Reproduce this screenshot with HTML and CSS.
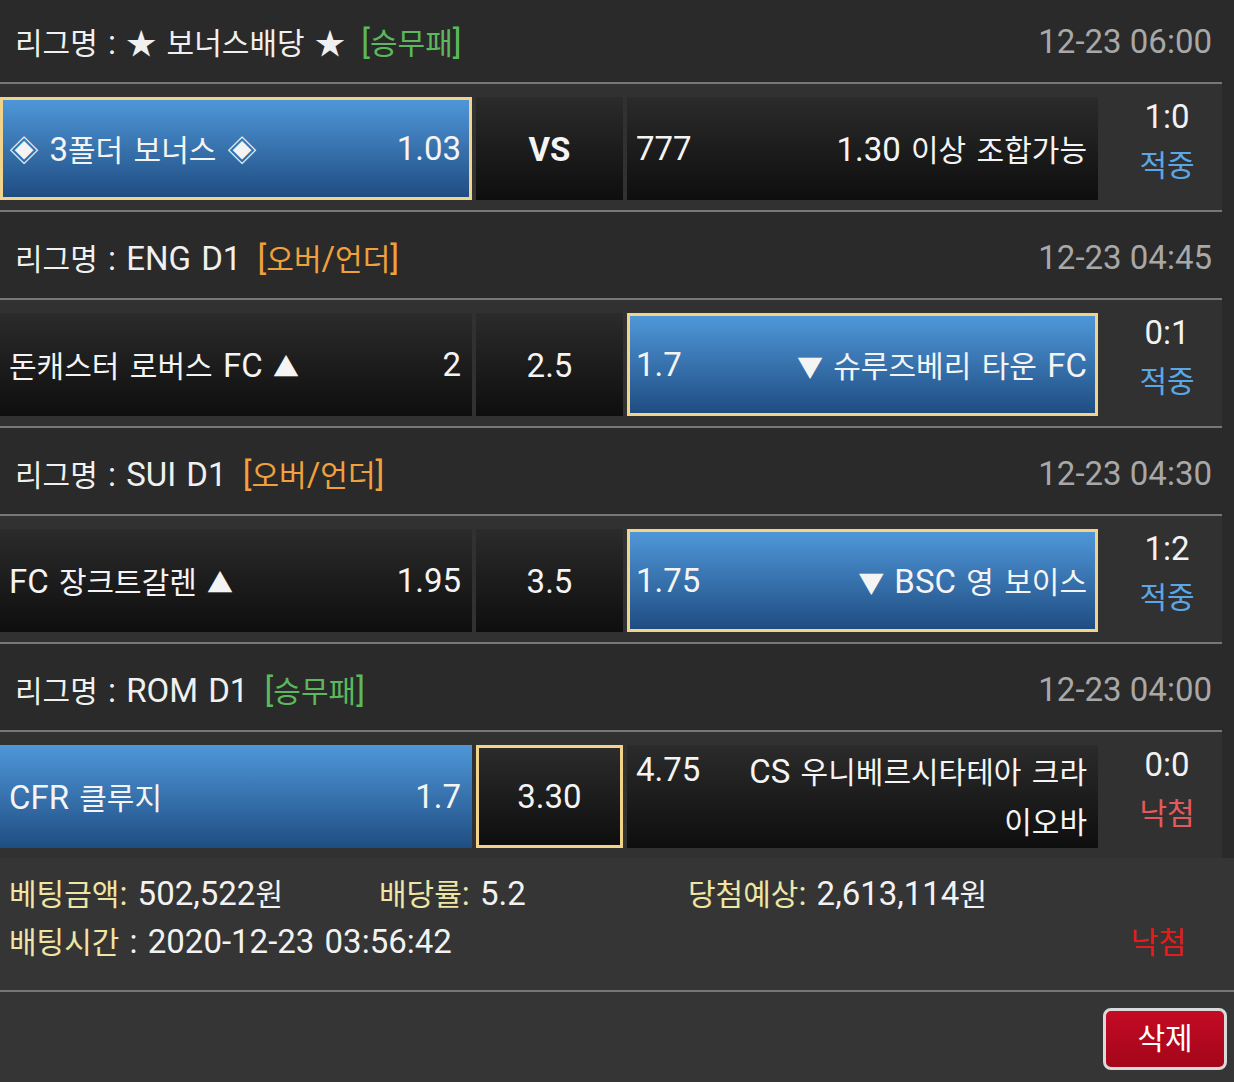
FILE: index.html
```html
<!DOCTYPE html>
<html lang="ko">
<head>
<meta charset="utf-8">
<title>베팅내역</title>
<link rel="stylesheet" href="styles.css">
</head>
<body>
<div class="page">
  <section class="league">
    <div class="league-head">
      <div class="league-name"><span class="k">리그명</span> : <span class="k">★ 보너스배당 ★</span> <span class="tag green">[<span class="k">승무패</span>]</span></div>
      <div class="league-time">12-23 06:00</div>
    </div>
    <div class="match">
      <div class="cell blue pick"><span class="name"><span class="k">◈ </span>3<span class="k">폴더 보너스 ◈</span></span><span class="odds">1.03</span></div>
      <div class="cell dark mid"><b>VS</b></div>
      <div class="cell dark"><span class="odds">777</span><span class="name">1.30 <span class="k">이상 조합가능</span></span></div>
      <div class="result"><div>1:0</div><div class="k hit">적중</div></div>
    </div>
  </section>

  <section class="league">
    <div class="league-head">
      <div class="league-name"><span class="k">리그명</span> : ENG D1 <span class="tag orange">[<span class="k">오버</span>/<span class="k">언더</span>]</span></div>
      <div class="league-time">12-23 04:45</div>
    </div>
    <div class="match">
      <div class="cell dark"><span class="name"><span class="k">돈캐스터 로버스 </span>FC <span class="tri">▲</span></span><span class="odds">2</span></div>
      <div class="cell dark mid">2.5</div>
      <div class="cell blue pick"><span class="odds">1.7</span><span class="name"><span class="tri">▼</span> <span class="k">슈루즈베리 타운 </span>FC</span></div>
      <div class="result"><div>0:1</div><div class="k hit">적중</div></div>
    </div>
  </section>

  <section class="league">
    <div class="league-head">
      <div class="league-name"><span class="k">리그명</span> : SUI D1 <span class="tag orange">[<span class="k">오버</span>/<span class="k">언더</span>]</span></div>
      <div class="league-time">12-23 04:30</div>
    </div>
    <div class="match">
      <div class="cell dark"><span class="name">FC <span class="k">장크트갈렌</span> <span class="tri">▲</span></span><span class="odds">1.95</span></div>
      <div class="cell dark mid">3.5</div>
      <div class="cell blue pick"><span class="odds">1.75</span><span class="name"><span class="tri">▼</span> BSC <span class="k">영 보이스</span></span></div>
      <div class="result"><div>1:2</div><div class="k hit">적중</div></div>
    </div>
  </section>

  <section class="league">
    <div class="league-head">
      <div class="league-name"><span class="k">리그명</span> : ROM D1 <span class="tag green">[<span class="k">승무패</span>]</span></div>
      <div class="league-time">12-23 04:00</div>
    </div>
    <div class="match last">
      <div class="cell blue"><span class="name">CFR <span class="k">클루지</span></span><span class="odds">1.7</span></div>
      <div class="cell dark mid pick">3.30</div>
      <div class="cell dark wrap"><span class="odds">4.75</span><span class="name">CS <span class="k">우니베르시타테아 크라<br>이오바</span></span></div>
      <div class="result"><div>0:0</div><div class="k miss">낙첨</div></div>
    </div>
  </section>

  <section class="summary">
    <div class="sum-row">
      <div class="sum-item"><span class="label"><span class="k">베팅금액</span>:</span> 502,522<span class="k">원</span></div>
      <div class="sum-item"><span class="label"><span class="k">배당률</span>:</span> 5.2</div>
      <div class="sum-item"><span class="label"><span class="k">당첨예상</span>:</span> 2,613,114<span class="k">원</span></div>
    </div>
    <div class="sum-line">
      <div class="sum-item"><span class="label k">배팅시간</span> : 2020-12-23 03:56:42</div>
      <div class="k status-miss">낙첨</div>
    </div>
  </section>

  <div class="actions">
    <button class="btn-delete" type="button"><span class="k">삭제</span></button>
  </div>
</div>
</body>
</html>
```

FILE: styles.css
```css
* {
  box-sizing: border-box;
}

html,
body {
  margin: 0;
  padding: 0;
}

body {
  width: 1234px;
  height: 1082px;
  overflow: hidden;
  background: #2a2a2a;
  color: #f2f2f2;
  font-family: Roboto, "Noto Sans CJK KR", sans-serif;
  font-size: 33px;
  line-height: 46px;
  word-spacing: 2px;
}

.k {
  font-family: "Noto Sans CJK KR", sans-serif;
  font-size: 30px;
}

.tri {
  font-family: "Noto Sans CJK KR", sans-serif;
  font-size: 26px;
}

.page {
  margin-top: -4px;
}

.league {
  width: 1222px;
}

.league-head {
  height: 88px;
  display: flex;
  align-items: center;
  justify-content: space-between;
  padding: 5px 10px 0 15px;
  border-bottom: 2px solid #777777;
  background: #2a2a2a;
  white-space: nowrap;
}

.league-name {
  color: #f0f0f0;
}

.tag {
  margin-left: 6px;
}

.green {
  color: #5cb85c;
}

.orange {
  color: #f0a13c;
}

.league-time {
  color: #a8a8a8;
  word-spacing: 0;
}

.match {
  height: 128px;
  display: grid;
  grid-template-columns: 472px 147px 471px 1fr;
  column-gap: 4px;
  padding: 13px 0 10px;
  background: #313131;
  border-bottom: 2px solid #777777;
}

.match.last {
  border-bottom: 0;
  height: 126px;
}

.cell {
  height: 103px;
  display: flex;
  align-items: center;
  justify-content: space-between;
  padding: 0 11px 0 9px;
  white-space: nowrap;
  color: #f4f4f4;
}

.cell.blue {
  background: linear-gradient(#4f97d9, #1f4d82);
}

.cell.dark {
  background: linear-gradient(#2b2b2b, #0e0e0e);
}

.cell.pick {
  border: 3px solid #f1d38c;
  padding: 0 8px 0 6px;
}

.cell.mid {
  justify-content: center;
  padding: 2px 0 0;
}

.cell.mid.pick {
  padding: 0;
}

.cell.mid b {
  font-weight: 700;
}

.cell.wrap {
  align-items: flex-start;
  padding-top: 1px;
  white-space: normal;
}

.cell.wrap .name {
  flex: 1;
  text-align: right;
  line-height: 48px;
}

.cell.wrap .odds {
  line-height: 48px;
  margin-right: 30px;
}

.result {
  margin-top: -3px;
  padding-left: 10px;
  text-align: center;
}

.hit {
  color: #5ba7e6;
}

.miss {
  color: #e35a5c;
}

.summary {
  width: 1234px;
  height: 134px;
  padding: 11px 0 0 9px;
  background: #353535;
  border-bottom: 2px solid #777777;
}

.sum-row {
  display: grid;
  grid-template-columns: 370px 309px auto;
}

.sum-line {
  display: flex;
  justify-content: space-between;
  padding-right: 48px;
}

.sum-item {
  white-space: nowrap;
}

.label {
  color: #efe5a4;
}

.status-miss {
  color: #e51c1c;
}

.actions {
  height: 92px;
  display: flex;
  justify-content: flex-end;
  align-items: flex-start;
  padding: 16px 7px 0 0;
  background: #353535;
}

.btn-delete {
  width: 124px;
  height: 62px;
  padding: 0;
  border: 3px solid #d9d9d9;
  border-radius: 8px;
  background: linear-gradient(#c40b24, #a3061a);
  color: #ffffff;
  line-height: 50px;
  cursor: pointer;
}

.btn-delete .k {
  font-size: 30px;
}
```
